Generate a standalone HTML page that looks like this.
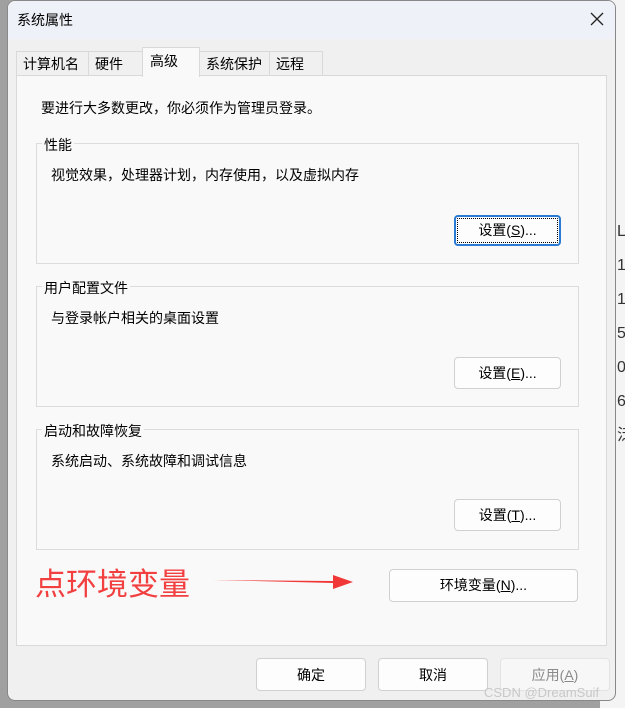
<!DOCTYPE html>
<html><head><meta charset="utf-8"><style>
*{margin:0;padding:0;box-sizing:border-box}
body{width:625px;height:708px;overflow:hidden;background:#a0a0a0;font-family:"Liberation Sans","Noto Sans CJK SC",sans-serif;font-size:14px;color:#000;position:relative}
.abs{position:absolute}
.bgr{left:600px;top:0;width:25px;height:708px;background:#f4f4f4}
.win{left:7px;top:0;width:609px;height:701px;background:#f0f0f0;border:1px solid #888;border-radius:8px;overflow:hidden}
.title{left:0;top:0;width:100%;height:38px;background:#eef1f7}
.tab{top:50px;height:25px;border:1px solid #d9d9d9;border-bottom:none;background:#f0f0f0;padding:2px 0 0 6px;font-size:14px}
.panel{left:8px;top:74px;width:591px;height:571px;background:#f9f9f9;border:1px solid #d9d9d9}
.grp{border:1px solid #dcdcdc;width:543px;height:121px;left:19px}
.lbl{background:#f9f9f9;padding:0 2px;font-size:14px}
.btn{background:#fdfdfd;border:1px solid #d0d0d0;border-radius:4px;text-align:center;font-size:14px;line-height:30px}
</style></head><body>
<div class="abs bgr"></div>
<div class="abs" style="left:617px;top:215px;font-size:16px;line-height:34px;color:#333">L<br>1<br>1<br>5<br>0<br>6<br>泛</div>
<div class="abs win">
 <div class="abs title"></div>
 <div class="abs" style="left:9px;top:9px;font-size:14px">系统属性</div>
 <svg class="abs" style="left:582px;top:11px" width="14" height="14"><path d="M1 1L13 13M13 1L1 13" stroke="#222" stroke-width="1.3"/></svg>
 <div class="abs tab" style="left:8px;width:73px">计算机名</div>
 <div class="abs tab" style="left:80px;width:56px">硬件</div>
 <div class="abs tab" style="left:191px;width:71px">系统保护</div>
 <div class="abs tab" style="left:261px;width:54px">远程</div>
 <div class="abs panel">
  <div class="abs" style="left:24px;top:22px">要进行大多数更改，你必须作为管理员登录。</div>
  <div class="abs grp" style="top:67px"></div>
  <div class="abs lbl" style="left:25px;top:59px">性能</div>
  <div class="abs" style="left:34px;top:89px">视觉效果，处理器计划，内存使用，以及虚拟内存</div>
  <div class="abs btn" style="left:437px;top:139px;width:107px;height:31px;border:2px solid #2a7bd4;outline:1px dotted #000;outline-offset:-4px;line-height:27px">设置(<u>S</u>)...</div>
  <div class="abs grp" style="top:210px"></div>
  <div class="abs lbl" style="left:25px;top:202px">用户配置文件</div>
  <div class="abs" style="left:34px;top:232px">与登录帐户相关的桌面设置</div>
  <div class="abs btn" style="left:437px;top:281px;width:107px;height:32px">设置(<u>E</u>)...</div>
  <div class="abs grp" style="top:353px"></div>
  <div class="abs lbl" style="left:25px;top:345px">启动和故障恢复</div>
  <div class="abs" style="left:34px;top:375px">系统启动、系统故障和调试信息</div>
  <div class="abs btn" style="left:437px;top:423px;width:107px;height:32px">设置(<u>T</u>)...</div>
  <div class="abs" style="left:18px;top:489px;font-size:31px;color:#f24040;line-height:40px">点环境变量</div>
  <svg class="abs" style="left:196px;top:495px" width="150" height="22"><path d="M0 9L120 10L120 4L140 11L120 18L120 12Z" fill="#f03838"/></svg>
  <div class="abs btn" style="left:372px;top:493px;width:189px;height:33px">环境变量(<u>N</u>)...</div>
 </div>
 <div class="abs btn" style="left:248px;top:657px;width:110px;height:33px;line-height:33px">确定</div>
 <div class="abs btn" style="left:370px;top:657px;width:110px;height:33px;line-height:33px">取消</div>
 <div class="abs btn" style="left:492px;top:657px;width:110px;height:33px;line-height:33px;color:#8a8a8a;background:#f7f7f7;border-color:#e3e3e3">应用(<u>A</u>)</div>
 <div class="abs tab" style="left:134px;top:46px;width:58px;height:30px;background:#f9f9f9;border-bottom:none;padding:3px 0 0 7px">高级</div>
 <div class="abs" style="left:476px;top:684px;font-size:13px;color:#c8c8c8">CSDN @DreamSuif</div>
</div>
</body></html>
